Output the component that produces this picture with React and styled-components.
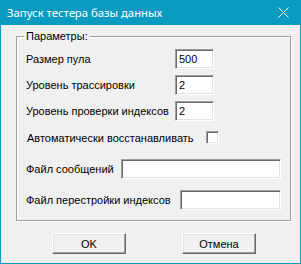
import React from "react";
import styled, { createGlobalStyle } from "styled-components";

const Global = createGlobalStyle`
  html, body { margin: 0; padding: 0; background: #f0f0f0; }
  * { box-sizing: border-box; }
`;

const Window = styled.div`
  width: 301px;
  height: 264px;
  border: 1px solid #0b9bc0;
  border-top: none;
  background: #f0f0f0;
  display: flex;
  flex-direction: column;
  font-family: "Liberation Sans", Arial, sans-serif;
  font-size: 11px;
  color: #000;
`;

const TitleBar = styled.div`
  height: 25px;
  background: #0b9bc0;
  display: flex;
  align-items: center;
  justify-content: space-between;
  padding: 0 12px 1px 7px;
  margin: 0 -1px;
  color: #fff;
  font-family: "Noto Sans", "Liberation Sans", sans-serif;
  font-size: 11.3px;
`;

const Title = styled.span``;

const Body = styled.div`
  flex: 1;
  padding: 11px 0 0 15px;
  display: flex;
  flex-direction: column;
`;

const Group = styled.div`
  position: relative;
  width: 275px;
  height: 185px;
  border: 1px solid #a0a0a0;
  box-shadow: inset 1px 1px 0 #fff, 1px 1px 0 #fff;
  padding: 0 0 0 9px;
  display: flex;
  flex-direction: column;
`;

const Legend = styled.span`
  position: absolute;
  top: -7px;
  left: 7px;
  padding: 0 2px;
  background: #f0f0f0;
  line-height: 13px;
`;

const Row = styled.div`
  display: grid;
  grid-template-columns: ${(p) => p.$label}px ${(p) => p.$field}px;
  align-items: center;
  margin-top: ${(p) => p.$top}px;
  height: ${(p) => p.$h || 20}px;
`;

const Label = styled.span`
  min-width: 0;
  padding-left: ${(p) => p.$ml || 0}px;
  white-space: nowrap;
`;

const Input = styled.div`
  height: 20px;
  background: #fff;
  border-top: 1px solid #a0a0a0;
  border-left: 1px solid #a0a0a0;
  border-right: 1px solid #fff;
  border-bottom: 1px solid #fff;
  box-shadow: inset 1px 1px 0 #696969, inset -1px -1px 0 #e3e3e3;
  padding: 2px 0 0 3px;
  font-size: 11px;
  line-height: 15px;
`;

const Check = styled.div`
  width: 13px;
  height: 13px;
  background: #fff;
  border-top: 1px solid #a0a0a0;
  border-left: 1px solid #a0a0a0;
  border-right: 1px solid #fff;
  border-bottom: 1px solid #fff;
  box-shadow: inset 1px 1px 0 #696969, inset -1px -1px 0 #e3e3e3;
`;

const Buttons = styled.div`
  display: flex;
  gap: 56px;
  margin-top: 12px;
  padding-left: 36px;
`;

const Button = styled.div`
  width: 74px;
  height: 21px;
  display: flex;
  align-items: center;
  justify-content: center;
  background: #f0f0f0;
  border-top: 1px solid #fff;
  border-left: 1px solid #fff;
  border-right: 1px solid #696969;
  border-bottom: 1px solid #696969;
  box-shadow: inset -1px -1px 0 #a0a0a0, inset 1px 1px 0 #e3e3e3;
  font-size: 11px;
`;

const Close = () => (
  <svg width="11" height="11" viewBox="0 0 11 11">
    <path d="M0.5 0.5 L10.5 10.5 M10.5 0.5 L0.5 10.5" stroke="#fff" strokeWidth="1" />
  </svg>
);

export default function App() {
  return (
    <>
      <Global />
      <Window>
        <TitleBar>
          <Title>Запуск тестера базы данных</Title>
          <Close />
        </TitleBar>
        <Body>
          <Group>
            <Legend>Параметры:</Legend>
            <Row $top={12} $label={149} $field={39}>
              <Label>Размер пула</Label>
              <Input>500</Input>
            </Row>
            <Row $top={6} $label={149} $field={39}>
              <Label>Уровень трассировки</Label>
              <Input>2</Input>
            </Row>
            <Row $top={6} $label={149} $field={39}>
              <Label>Уровень проверки индексов</Label>
              <Input>2</Input>
            </Row>
            <Row $top={10} $h={13} $label={180} $field={13}>
              <Label $ml={1}>Автоматически восстанавливать</Label>
              <Check />
            </Row>
            <Row $top={15} $label={95} $field={160}>
              <Label>Файл сообщений</Label>
              <Input />
            </Row>
            <Row $top={11} $label={154} $field={101}>
              <Label>Файл перестройки индексов</Label>
              <Input />
            </Row>
          </Group>
          <Buttons>
            <Button>OK</Button>
            <Button>Отмена</Button>
          </Buttons>
        </Body>
      </Window>
    </>
  );
}
